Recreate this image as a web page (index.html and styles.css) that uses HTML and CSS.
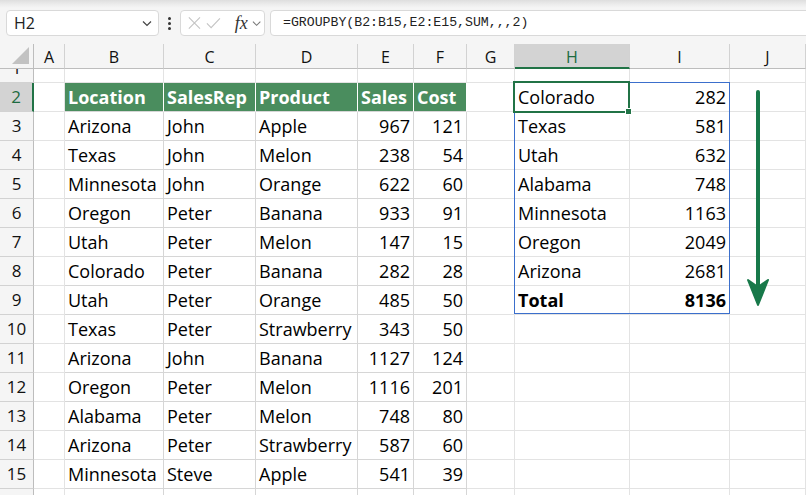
FILE: index.html
```html
<!DOCTYPE html>
<html>
<head>
<meta charset="utf-8">
<link rel="stylesheet" href="styles.css">
</head>
<body>
<div class="toolbar">
  <div class="namebox"><span>H2</span>
    <svg class="chev" width="10" height="7" viewBox="0 0 10 7"><path d="M1 1.5 L5 5.5 L9 1.5" fill="none" stroke="#444" stroke-width="1.2"/></svg>
  </div>
  <div class="dots"><span></span><span></span><span></span></div>
  <div class="fxbox">
    <svg width="16" height="16" viewBox="0 0 16 16"><path d="M2 2 L14 14 M14 2 L2 14" stroke="#c4c4c4" stroke-width="1.2" fill="none"/></svg>
    <svg width="16" height="16" viewBox="0 0 16 16"><path d="M1 8.5 L5.5 13 L15 3" stroke="#c4c4c4" stroke-width="1.2" fill="none"/></svg>
    <span class="fx">fx</span>
    <svg width="10" height="7" viewBox="0 0 10 7"><path d="M1 1.5 L5 5.5 L9 1.5" fill="none" stroke="#777" stroke-width="1.1"/></svg>
  </div>
  <div class="formula">=GROUPBY(B2:B15,E2:E15,SUM,,,2)</div>
</div>

<div class="sheet">
  <div class="row colhead">
    <div class="c corner"><svg width="18" height="18" viewBox="0 0 18 18"><path d="M0 17 L17 17 L17 0 Z" fill="#c2c2c2"/></svg></div>
    <div class="c ch">A</div><div class="c ch">B</div><div class="c ch">C</div><div class="c ch">D</div><div class="c ch">E</div><div class="c ch">F</div><div class="c ch">G</div><div class="c ch sel">H</div><div class="c ch">I</div><div class="c ch">J</div>
  </div>
  <div class="row r1">
    <div class="c rh"><span class="clip">1</span></div>
    <div class="c"></div><div class="c"></div><div class="c"></div><div class="c"></div><div class="c"></div><div class="c"></div><div class="c"></div><div class="c"></div><div class="c"></div><div class="c"></div>
  </div>
  <div class="row">
    <div class="c rh rsel">2</div><div class="c"></div>
    <div class="c th">Location</div><div class="c th">SalesRep</div><div class="c th">Product</div><div class="c th">Sales</div><div class="c th">Cost</div>
    <div class="c"></div><div class="c res">Colorado</div><div class="c res num">282</div><div class="c"></div>
  </div>
  <div class="row">
    <div class="c rh">3</div><div class="c"></div>
    <div class="c td">Arizona</div><div class="c td">John</div><div class="c td">Apple</div><div class="c td num">967</div><div class="c td num">121</div>
    <div class="c"></div><div class="c res">Texas</div><div class="c res num">581</div><div class="c"></div>
  </div>
  <div class="row">
    <div class="c rh">4</div><div class="c"></div>
    <div class="c td">Texas</div><div class="c td">John</div><div class="c td">Melon</div><div class="c td num">238</div><div class="c td num">54</div>
    <div class="c"></div><div class="c res">Utah</div><div class="c res num">632</div><div class="c"></div>
  </div>
  <div class="row">
    <div class="c rh">5</div><div class="c"></div>
    <div class="c td">Minnesota</div><div class="c td">John</div><div class="c td">Orange</div><div class="c td num">622</div><div class="c td num">60</div>
    <div class="c"></div><div class="c res">Alabama</div><div class="c res num">748</div><div class="c"></div>
  </div>
  <div class="row">
    <div class="c rh">6</div><div class="c"></div>
    <div class="c td">Oregon</div><div class="c td">Peter</div><div class="c td">Banana</div><div class="c td num">933</div><div class="c td num">91</div>
    <div class="c"></div><div class="c res">Minnesota</div><div class="c res num">1163</div><div class="c"></div>
  </div>
  <div class="row">
    <div class="c rh">7</div><div class="c"></div>
    <div class="c td">Utah</div><div class="c td">Peter</div><div class="c td">Melon</div><div class="c td num">147</div><div class="c td num">15</div>
    <div class="c"></div><div class="c res">Oregon</div><div class="c res num">2049</div><div class="c"></div>
  </div>
  <div class="row">
    <div class="c rh">8</div><div class="c"></div>
    <div class="c td">Colorado</div><div class="c td">Peter</div><div class="c td">Banana</div><div class="c td num">282</div><div class="c td num">28</div>
    <div class="c"></div><div class="c res">Arizona</div><div class="c res num">2681</div><div class="c"></div>
  </div>
  <div class="row">
    <div class="c rh">9</div><div class="c"></div>
    <div class="c td">Utah</div><div class="c td">Peter</div><div class="c td">Orange</div><div class="c td num">485</div><div class="c td num">50</div>
    <div class="c"></div><div class="c res bold">Total</div><div class="c res num bold">8136</div><div class="c"></div>
  </div>
  <div class="row">
    <div class="c rh">10</div><div class="c"></div>
    <div class="c td">Texas</div><div class="c td">Peter</div><div class="c td">Strawberry</div><div class="c td num">343</div><div class="c td num">50</div>
    <div class="c"></div><div class="c"></div><div class="c"></div><div class="c"></div>
  </div>
  <div class="row">
    <div class="c rh">11</div><div class="c"></div>
    <div class="c td">Arizona</div><div class="c td">John</div><div class="c td">Banana</div><div class="c td num">1127</div><div class="c td num">124</div>
    <div class="c"></div><div class="c"></div><div class="c"></div><div class="c"></div>
  </div>
  <div class="row">
    <div class="c rh">12</div><div class="c"></div>
    <div class="c td">Oregon</div><div class="c td">Peter</div><div class="c td">Melon</div><div class="c td num">1116</div><div class="c td num">201</div>
    <div class="c"></div><div class="c"></div><div class="c"></div><div class="c"></div>
  </div>
  <div class="row">
    <div class="c rh">13</div><div class="c"></div>
    <div class="c td">Alabama</div><div class="c td">Peter</div><div class="c td">Melon</div><div class="c td num">748</div><div class="c td num">80</div>
    <div class="c"></div><div class="c"></div><div class="c"></div><div class="c"></div>
  </div>
  <div class="row">
    <div class="c rh">14</div><div class="c"></div>
    <div class="c td">Arizona</div><div class="c td">Peter</div><div class="c td">Strawberry</div><div class="c td num">587</div><div class="c td num">60</div>
    <div class="c"></div><div class="c"></div><div class="c"></div><div class="c"></div>
  </div>
  <div class="row">
    <div class="c rh">15</div><div class="c"></div>
    <div class="c td">Minnesota</div><div class="c td">Steve</div><div class="c td">Apple</div><div class="c td num">541</div><div class="c td num">39</div>
    <div class="c"></div><div class="c"></div><div class="c"></div><div class="c"></div>
  </div>
  <div class="row">
    <div class="c rh"></div><div class="c"></div>
    <div class="c td"></div><div class="c td"></div><div class="c td"></div><div class="c td"></div><div class="c td"></div>
    <div class="c"></div><div class="c"></div><div class="c"></div><div class="c"></div>
  </div>

  <div class="spill"></div>
  <div class="active"></div>
  <div class="handle"></div>
  <svg class="arrow" width="30" height="220" viewBox="0 0 30 220">
    <line x1="15" y1="4" x2="15" y2="200" stroke="#18794a" stroke-width="4" stroke-linecap="round"/>
    <path d="M5 192 L15 217 L25 192 L15 199 Z" fill="#18794a" stroke="#18794a" stroke-width="2" stroke-linejoin="round"/>
  </svg>
</div>
</body>
</html>
```

FILE: styles.css
```css
* { box-sizing: border-box; }
html, body { margin: 0; padding: 0; }
body {
  width: 806px;
  height: 495px;
  overflow: hidden;
  background: #fff;
  font-family: "Open Sans", "Noto Sans", sans-serif;
  color: #000;
}

.toolbar {
  height: 44px;
  display: flex;
  align-items: flex-start;
  padding: 10px 0 0 6px;
  background: linear-gradient(to bottom, #dedede 0px, #ebebeb 4px, #f5f5f5 8px, #f5f5f5 100%);
  overflow: hidden;
}
.namebox {
  width: 153px;
  height: 26px;
  flex: none;
  background: #fff;
  border: 1px solid #d9d9d9;
  border-radius: 4px;
  display: flex;
  align-items: center;
  justify-content: space-between;
  padding: 0 6px 0 7px;
  font-size: 16px;
  color: #222;
}
.dots {
  width: 21px;
  height: 26px;
  flex: none;
  display: flex;
  flex-direction: column;
  align-items: center;
  justify-content: center;
  gap: 2px;
}
.dots span {
  width: 3px;
  height: 3px;
  border-radius: 50%;
  background: #333;
}
.fxbox {
  width: 85px;
  height: 26px;
  flex: none;
  background: #fff;
  border: 1px solid #d9d9d9;
  border-radius: 4px;
  display: flex;
  align-items: center;
  padding: 0 3px 0 6px;
  gap: 4px;
}
.fx {
  font-family: "Liberation Serif", serif;
  font-style: italic;
  font-size: 18px;
  color: #333;
  margin-left: 10px;
  line-height: 20px;
}
.formula {
  flex: 1;
  height: 26px;
  margin-left: 5px;
  margin-right: -10px;
  background: #fff;
  border: 1px solid #d9d9d9;
  border-radius: 4px;
  padding-left: 12px;
  font-family: "Liberation Mono", monospace;
  font-size: 13.2px;
  line-height: 24px;
  color: #222;
  white-space: nowrap;
}

.sheet { position: relative; }
.row {
  display: grid;
  grid-template-columns: 34px 31px 99px 92px 102px 56px 53px 48px 115px 100px 76px;
  height: 29px;
}
.c {
  border-right: 1px solid #e3e3e3;
  border-bottom: 1px solid #e3e3e3;
  padding: 0 3px;
  font-size: 18px;
  line-height: 28px;
  white-space: nowrap;
  overflow: hidden;
}
.num { text-align: right; }
.bold { font-weight: 700; }

.colhead { height: 25px; }
.ch, .corner {
  background: #f5f5f5;
  border-right-color: #d2d2d2;
  border-bottom-color: #bdbdbd;
  text-align: center;
  font-size: 16px;
  line-height: 24px;
  padding: 1px 0 0;
  color: #111;
}
.corner {
  border-right-color: #bdbdbd;
  display: flex;
  align-items: flex-end;
  justify-content: flex-end;
  padding: 0 3px 3px 0;
}
.ch.sel {
  background: #d3d3d3;
  color: #1d6b40;
  border-bottom: 2px solid #217346;
}

.r1 { height: 14px; }
.r1 .c { line-height: 13px; }
.rh {
  background: #f5f5f5;
  border-right-color: #bdbdbd;
  border-bottom-color: #d2d2d2;
  text-align: center;
  font-size: 17px;
  padding: 0;
  color: #111;
}
.rh .clip {
  display: block;
  line-height: 28px;
  margin-top: -15px;
}
.rh.rsel {
  background: #d3d3d3;
  color: #1d6b40;
  border-right: 2px solid #217346;
}

.th {
  background: #4a8d5e;
  color: #fff;
  font-weight: 700;
  border-right-color: #fff;
  border-bottom-color: #d6d6d6;
}
.td {
  border-right-color: #d6d6d6;
  border-bottom-color: #d6d6d6;
}

.spill {
  position: absolute;
  left: 514px;
  top: 38px;
  width: 216px;
  height: 232px;
  border: 1px solid #3b6fcc;
  pointer-events: none;
}
.active {
  position: absolute;
  left: 513px;
  top: 37px;
  width: 117px;
  height: 32px;
  border: 2px solid #217346;
}
.handle {
  position: absolute;
  left: 625px;
  top: 64px;
  width: 7px;
  height: 7px;
  background: #217346;
  border: 1px solid #fff;
}
.arrow {
  position: absolute;
  left: 743px;
  top: 44px;
}
```
